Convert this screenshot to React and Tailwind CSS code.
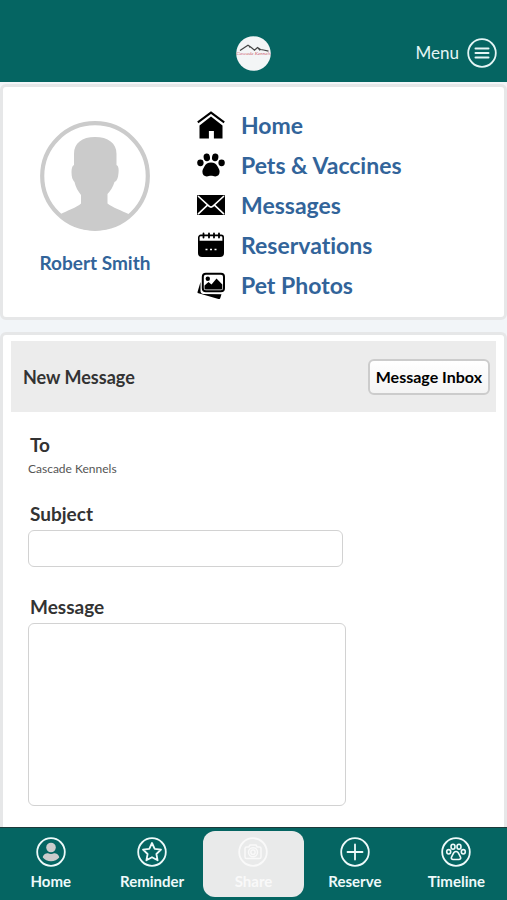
import React, { useState } from 'react';

// ── Menu icons (solid black) ────────────────────────────────────────────────
const HouseIcon = () => (
  <svg className="w-7 h-7" viewBox="0 0 28 28" fill="currentColor">
    <path d="M14 5.6L25.5 14.6V27.4h-8.6v-7.4h-5v7.4H2.5V14.6z" />
    <path d="M0.8 11.4L14 1.6l13.2 9.8" fill="none" stroke="currentColor" strokeWidth="2" />
  </svg>
);

const PawIcon = () => (
  <svg className="w-7 h-7" viewBox="0 0 28 28" fill="currentColor">
    <ellipse cx="9.8" cy="6.4" rx="3.2" ry="3.9" transform="rotate(-8 9.8 6.4)" />
    <ellipse cx="18.2" cy="6.4" rx="3.2" ry="3.9" transform="rotate(8 18.2 6.4)" />
    <ellipse cx="3.4" cy="11.8" rx="3.2" ry="3.4" />
    <ellipse cx="24.6" cy="11.8" rx="3.2" ry="3.4" />
    <path d="M14 11.4c3.400 0 5.200 1.600 6.600 4 1.200 2 2 3.400 2 5.400 0 2.900-1.800 4.600-4.400 4.600-1.600 0-2.700-.7-4.200-.7s-2.600.7-4.200.7c-2.600 0-4.400-1.700-4.400-4.600 0-2 .8-3.400 2-5.400 1.400-2.400 3.200-4 6.600-4z" />
  </svg>
);

const EnvelopeIcon = () => (
  <svg className="w-7 h-7" viewBox="0 0 28 28">
    <rect x="0" y="4" width="28" height="20" rx="1" fill="currentColor" />
    <path d="M1 5l11 10.2a3 3 0 004 0L27 5M1 23.2l9.5-9M27 23.2l-9.5-9" fill="none" stroke="white" strokeWidth="1.6" />
  </svg>
);

const CalendarIcon = () => (
  <svg className="w-7 h-7" viewBox="0 0 28 28" fill="currentColor">
    <path d="M1 9.8h26V22a4 4 0 01-4 4H5a4 4 0 01-4-4z" />
    <path d="M1.8 11V6.4a2 2 0 012-2h20.4a2 2 0 012 2V11" fill="none" stroke="currentColor" strokeWidth="1.6" />
    <path d="M6.500 2.500v4M12 2.500v4M17 2.500v4M22 2.500v4" stroke="currentColor" strokeWidth="1.8" strokeLinecap="round" />
    <path d="M8.500 18.500h2M13 18.500h2M17.500 18.500h2" stroke="white" strokeWidth="1.5" />
  </svg>
);

const PhotosIcon = () => (
  <svg className="w-7 h-7" viewBox="0 0 28 28" fill="currentColor">
    <path d="M3.5 11v9.5a3 3 0 002.500 2.500l18.500.2-1.200 3.800a1.500 1.500 0 01-1.800 1L1.500 22.300a1.200 1.200 0 01-.9-1.600z" />
    <rect x="5.8" y="2.800" width="21.200" height="17.500" rx="3" fill="white" stroke="currentColor" strokeWidth="2" />
    <circle cx="10.8" cy="7.7" r="2.200" />
    <path d="M7.500 17.500v-3l4-3.500 3 2.500 5-6 5.800 6v4q0 1-1 1H8.500q-1 0-1-1z" />
  </svg>
);

// ── Round tab bar icons ─────────────────────────────────────────────────────
const Ring = ({ children }) => (
  <svg className="w-[30px] h-[30px]" viewBox="0 0 30 30" fill="none" stroke="currentColor" strokeWidth="1.8" strokeLinejoin="round" strokeLinecap="round">
    <circle cx="15" cy="15" r="13.8" />
    {children}
  </svg>
);

const tabs = [
  {
    label: 'Home',
    icon: (
      <g fill="#cccccc" stroke="none">
        <circle cx="15" cy="10.5" r="4.8" />
        <path d="M6.8 20.5c0-2.700 3-4.200 5.200-4.200 1 .5 1.900.7 3 .7s2-.2 3-.7c2.200 0 5.200 1.500 5.200 4.200-1.800 2.400-4.800 3.800-8.200 3.800s-6.400-1.400-8.200-3.800z" />
      </g>
    ),
  },
  {
    label: 'Reminder',
    icon: <path d="M15 6l2.700 5.800 6.300.8-4.600 4.400 1.200 6.300L15 20.200l-5.600 3.100 1.200-6.300L6 12.600l6.300-.8z" />,
  },
  {
    label: 'Share',
    icon: (
      <g strokeWidth="1.5">
        <path d="M8.500 10h2.300l1.200-2h6l1.200 2h2.300a1.500 1.500 0 011.500 1.500v8.500a1.500 1.500 0 01-1.500 1.500h-13A1.500 1.500 0 017 20v-8.500A1.500 1.500 0 018.500 10z" />
        <circle cx="15" cy="15.200" r="4.500" />
        <circle cx="15" cy="15.200" r="2.200" />
      </g>
    ),
  },
  {
    label: 'Reserve',
    icon: <path d="M15 7.500v15M7.500 15h15" />,
  },
  {
    label: 'Timeline',
    icon: (
      <g strokeWidth="1.6">
        <ellipse cx="12" cy="9.700" rx="2" ry="2.500" />
        <ellipse cx="18" cy="9.700" rx="2" ry="2.500" />
        <ellipse cx="7.700" cy="14.800" rx="2" ry="2.200" />
        <ellipse cx="22.300" cy="14.800" rx="2" ry="2.200" />
        <path d="M15 14.500c1.600 0 2.400 1.200 3 2.700l1.500 2.900c.7 1.500-.3 2.400-1.600 2.400h-5.800c-1.300 0-2.300-.9-1.600-2.400l1.500-2.900c.6-1.500 1.400-2.700 3-2.700z" />
      </g>
    ),
  },
];

const menuItems = [
  { label: 'Home', Icon: HouseIcon },
  { label: 'Pets & Vaccines', Icon: PawIcon },
  { label: 'Messages', Icon: EnvelopeIcon },
  { label: 'Reservations', Icon: CalendarIcon },
  { label: 'Pet Photos', Icon: PhotosIcon },
];

const Logo = () => (
  <svg className="w-[35px] h-[35px]" viewBox="0 0 35 35">
    <circle cx="17.500" cy="17.500" r="17.300" fill="#f3f5f6" />
    <path d="M4 14.500l4.500-3L12 9.200l3 2 3.500 3 3-2.700 3 2 3 .5 5 1.200M13 11l2 .2M22 12l2 2.500" fill="none" stroke="#444" strokeWidth="1.200" />
    <text x="17.500" y="18.500" textAnchor="middle" fontFamily="Liberation Serif, serif" fontStyle="italic" fontSize="5" fill="#cf5f6f">Cascade Kennels</text>
  </svg>
);

const Avatar = () => (
  <svg className="w-[110px] h-[110px]" viewBox="0 0 110 110">
    <circle cx="55" cy="55" r="52.800" fill="white" stroke="#cbcbcb" strokeWidth="4.200" />
    <path fill="#cbcbcb" d="M34 33c0-11 8-17 21-17s21.500 6 21.500 17v11c2 1 2.500 4 2 8-.4 5-1.500 8-4 9-1.500 5-4 9-7 12v9.500c5 4 14 7 22 11C81 104 69 109.500 55 109.500S28 104 20 93.500c7-4 17-7 21-11V74c-3-4-5.500-8-6.500-13-2-2-3-5-3-10 0-3 .5-6 2.500-7z" />
  </svg>
);

const labelClass = 'block pl-0.5 text-[19px] leading-6 font-bold text-[#333333]';
const boxClass = 'block rounded-md border border-[#d2d2d2] bg-white px-2 text-base text-[#333333]';

const App = () => {
  const [subject, setSubject] = useState('');
  const [message, setMessage] = useState('');

  return (
    <div className="min-h-screen flex flex-col bg-[#f2f5f8] font-['Lato',sans-serif] [font-variant-ligatures:none]">
      <header className="grid grid-cols-3 items-center h-[82px] pt-6 px-2.5 bg-[#056562]">
        <a href="#home" aria-label="Cascade Kennels" className="col-start-2 justify-self-center">
          <Logo />
        </a>
        <button type="button" className="justify-self-end flex items-center gap-2 text-[17px] text-[#e4f5f5]">
          Menu
          <Ring><path strokeWidth="2" d="M8.500 10.500h13M8.500 15h13M8.500 19.500h13" /></Ring>
        </button>
      </header>

      <main className="flex-1 flex flex-col gap-3 pt-0.5">
        {/* Profile */}
        <section className="flex rounded-md border-[3px] border-[#e6e7e8] bg-white pt-[18px] pb-3">
          <div className="w-[184px] pt-4 flex flex-col items-center gap-5">
            <Avatar />
            <a href="#profile" className="text-[19px] leading-6 font-bold text-[#32649a]">Robert Smith</a>
          </div>
          <ul className="pl-2.5">
            {menuItems.map(({ label, Icon }) => (
              <li key={label}>
                <a href="#menu" className="flex items-center gap-4 h-10 text-[23px] font-bold text-[#32649a]">
                  <span className="text-black"><Icon /></span>
                  {label}
                </a>
              </li>
            ))}
          </ul>
        </section>

        {/* Message form */}
        <section className="flex-1 rounded-t-md border-[3px] border-b-0 border-[#e6e7e8] bg-white px-2 pt-1.5 pb-5">
          <div className="flex items-center justify-between h-[71px] pl-3 pr-1.5 bg-[#ececec]">
            <h1 className="text-lg font-bold text-[#333333]">New Message</h1>
            <button type="button" className="h-9 px-1.5 rounded-md border-2 border-[#cccccc] bg-linear-to-b from-white to-[#f4f4f4] text-base font-bold text-black">
              Message Inbox
            </button>
          </div>

          <form className="px-[17px] pt-[21px]">
            <h2 className={labelClass}>To</h2>
            <p className="text-xs leading-6 text-[#555555]">Cascade Kennels</p>

            <label htmlFor="subject" className={`${labelClass} mt-[21px]`}>Subject</label>
            <input id="subject" type="text" value={subject} onChange={(e) => setSubject(e.target.value)}
              className={`${boxClass} mt-1 w-[315px] max-w-full h-[37px]`} />

            <label htmlFor="message" className={`${labelClass} mt-7`}>Message</label>
            <textarea id="message" value={message} onChange={(e) => setMessage(e.target.value)}
              className={`${boxClass} mt-1 w-[318px] max-w-full h-[183px] py-2 resize-none`} />
          </form>
        </section>
      </main>

      <nav className="sticky bottom-0 grid grid-cols-5 h-[73px] py-[3px] border-t border-[#1d3a3a] bg-[#056562]">
        {tabs.map(({ label, icon }) => (
          <a key={label} href="#tab"
            className={`flex flex-col items-center pt-1.5 rounded-xl text-[15px] leading-5 font-bold ${label === 'Share' ? 'bg-[#e9eaea] text-[#f9f9f9]' : 'text-[#eefafa]'}`}>
            <Ring>{icon}</Ring>
            <span className="mt-1">{label}</span>
          </a>
        ))}
      </nav>
    </div>
  );
};

export default App;
